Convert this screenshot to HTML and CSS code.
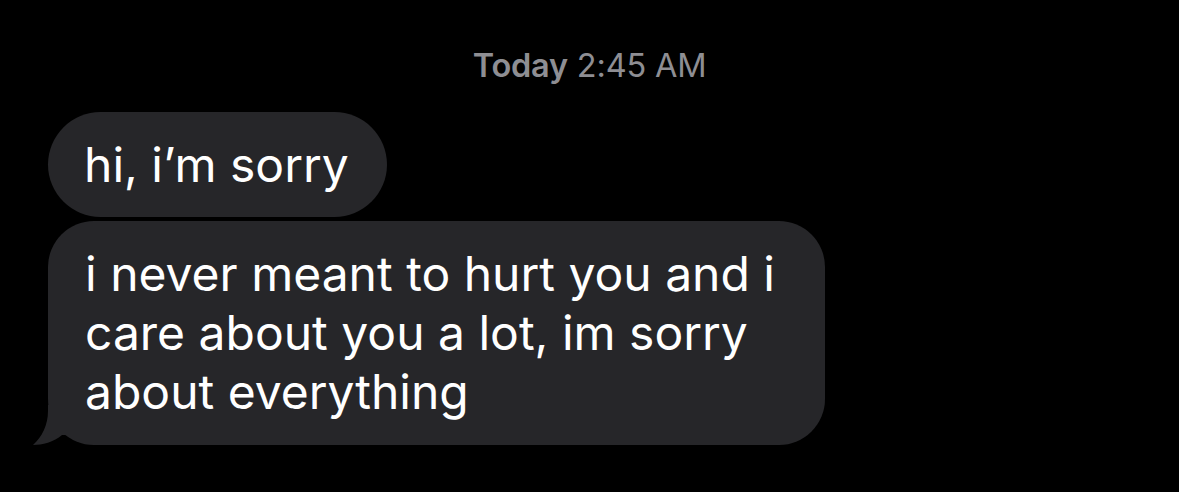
FILE: index.html
```html
<!DOCTYPE html>
<html>
<head>
<meta charset="utf-8">
<link rel="stylesheet" href="styles.css">
</head>
<body>
<div class="thread">
  <div class="stamp"><span class="day">Today</span> 2:45 AM</div>
  <div class="msgs">
    <div class="bubble single">hi, i’m sorry</div>
    <div class="bubble last">i never meant to hurt you and i<br>care about you a lot, im sorry<br>about everything<svg class="tail" width="40" height="40" viewBox="0 0 40 40"><path d="M16 0 L16 6 C16 20 10 32 1 40 C10 40 22 37 30 30 L40 30 L40 0 Z" fill="#262629"/></svg></div>
  </div>
</div>
</body>
</html>
```

FILE: styles.css
```css
html, body {
  margin: 0;
  padding: 0;
  background: #000;
}
.thread {
  font-family: Inter, "Liberation Sans", sans-serif;
  color: #fff;
  padding-top: 46px;
}
.stamp {
  text-align: center;
  color: #8e8e93;
  font-size: 32.5px;
  line-height: 40px;
  letter-spacing: -0.2px;
}
.day {
  font-weight: 600;
}
.msgs {
  display: flex;
  flex-direction: column;
  align-items: flex-start;
  gap: 4px;
  padding-left: 48px;
  margin-top: 26px;
}
.bubble {
  position: relative;
  background: #262629;
  font-size: 48px;
  line-height: 59px;
  letter-spacing: 0;
  color: #fff;
}
.single {
  border-radius: 53px;
  padding: 23px 38px 23px 36px;
}
.last {
  border-radius: 46px;
  padding: 23px 50px 24px 37px;
}
.tail {
  position: absolute;
  left: -16px;
  bottom: 0;
}
```
